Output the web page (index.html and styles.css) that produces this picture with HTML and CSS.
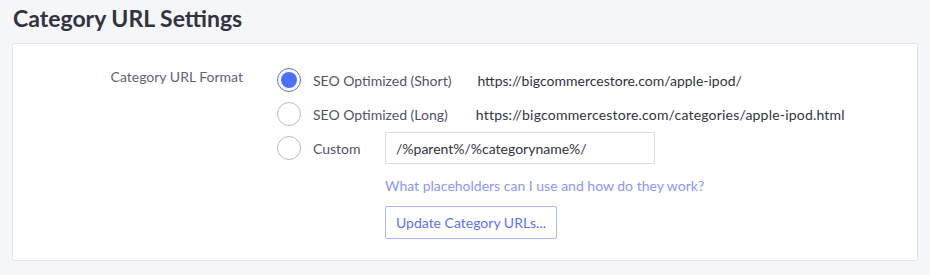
FILE: index.html
```html
<!DOCTYPE html>
<html lang="en">
<head>
    <meta charset="UTF-8" />
    <title>Category URL Settings</title>
    <link rel="stylesheet" href="styles.css">
</head>
<body>
    <h1>Category URL Settings</h1>

    <div class="panel">
        <div class="field">
            <div class="field-label">Category URL Format</div>
            <div class="field-body">
                <div class="option">
                    <span class="radio checked"></span>
                    <span class="option-name">SEO Optimized (Short)</span>
                    <span class="example url-short">https://bigcommercestore.com/apple-ipod/</span>
                </div>
                <div class="option">
                    <span class="radio"></span>
                    <span class="option-name">SEO Optimized (Long)</span>
                    <span class="example url-long">https://bigcommercestore.com/categories/apple-ipod.html</span>
                </div>
                <div class="option">
                    <span class="radio"></span>
                    <span class="option-name custom">Custom</span>
                    <input type="text" class="text-input" value="/%parent%/%categoryname%/" />
                </div>
                <div class="extra">
                    <a href="#" class="help-link">What placeholders can I use and how do they work?</a>
                    <button class="button">Update Category URLs...</button>
                </div>
            </div>
        </div>
    </div>
</body>
</html>
```

FILE: styles.css
```css
body {
    margin: 0;
    padding: 0 12px;
    background: #f5f6f8;
    font-family: 'Lato', 'Open Sans', sans-serif;
    color: #313440;
}

h1 {
    margin: 0;
    padding: 5px 0 12px 1px;
    font-size: 23px;
    font-weight: 700;
    line-height: 26px;
    color: #313440;
}

.panel {
    background: #fff;
    border: 1px solid #e3e5ea;
    border-radius: 2px;
    padding: 19px 0 21px 0;
}

.field {
    display: flex;
}

.field-label {
    width: 230px;
    padding-top: 5px;
    text-align: right;
    font-size: 14px;
    color: #5e637a;
}

.field-body {
    margin-left: 34px;
    flex: 1;
}

.option {
    display: flex;
    align-items: center;
    height: 34px;
    font-size: 14px;
}

.radio {
    width: 22px;
    height: 22px;
    border: 1px solid #b9bcc7;
    border-radius: 50%;
    position: relative;
    flex: none;
}

.radio.checked {
    border-color: #4b71fc;
}

.radio.checked::after {
    content: '';
    position: absolute;
    top: 3px;
    left: 3px;
    width: 16px;
    height: 16px;
    border-radius: 50%;
    background: #4b71fc;
}

.option-name {
    margin-left: 12px;
    color: #4f5468;
}

.example { color: #313440; }
.url-short { margin-left: 26px; }
.url-long { margin-left: 28px; letter-spacing: 0.2px; }

.custom { width: 72px; }

.text-input {
    width: 270px;
    height: 32px;
    box-sizing: border-box;
    border: 1px solid #d9dce3;
    border-radius: 2px;
    padding: 0 10px;
    font-family: inherit;
    font-size: 14px;
    color: #313440;
}

.extra {
    margin-left: 108px;
    padding-top: 8px;
}

.help-link {
    display: block;
    font-size: 14px;
    color: #8b96f9;
    text-decoration: none;
    line-height: 26px;
}

.button {
    margin-top: 7px;
    height: 33px;
    padding: 0 10px;
    background: #fff;
    border: 1px solid #a9b6fb;
    border-radius: 2px;
    font-family: inherit;
    font-size: 14px;
    color: #5d72f0;
}
```
